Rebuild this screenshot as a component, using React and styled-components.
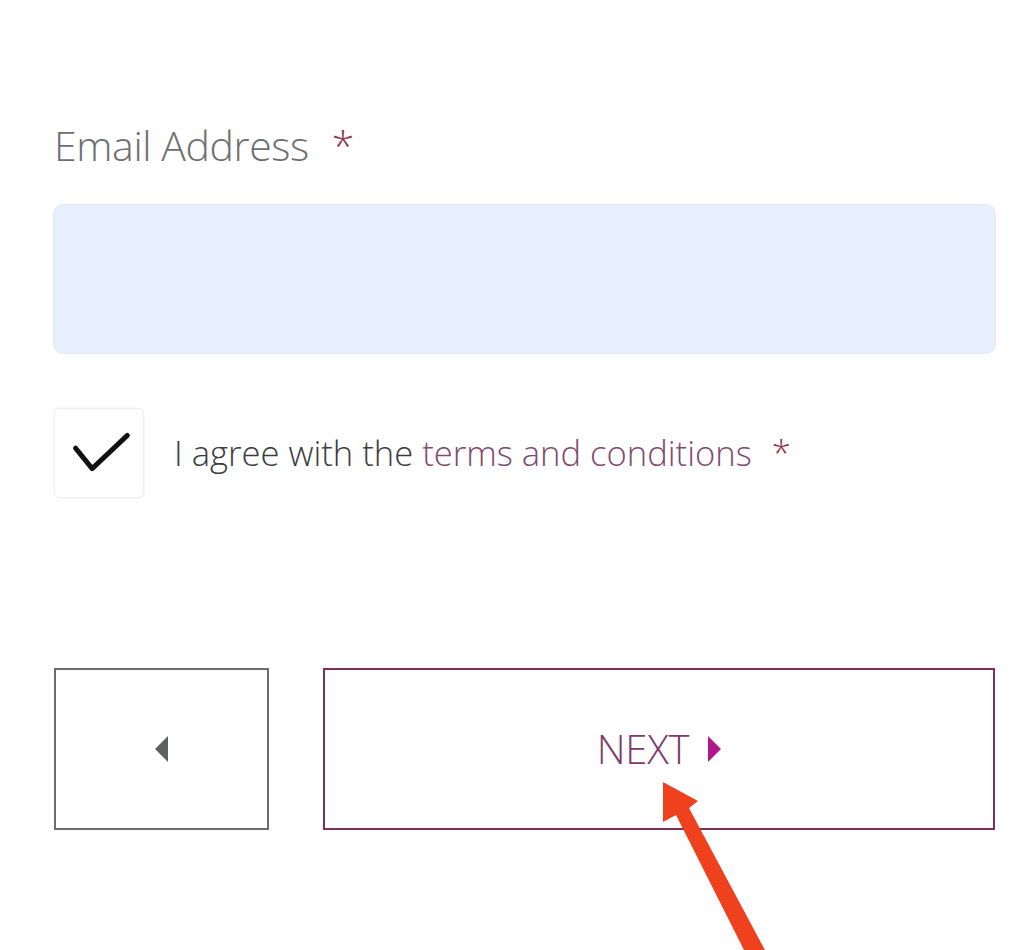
import React from "react";
import styled, { createGlobalStyle } from "styled-components";

const GlobalStyle = createGlobalStyle`
    html, body {
        margin: 0;
        padding: 0;
        background: #ffffff;
        font-family: "Open Sans", "Liberation Sans", sans-serif;
    }
`;

const Page = styled.div`
    position: relative;
    width: 1024px;
    height: 950px;
    overflow: hidden;
    box-sizing: border-box;
    padding: 120px 29px 0 54px;
`;

const Label = styled.div`
    font-size: 41px;
    line-height: 50px;
    font-weight: 300;
    color: #6e6e6e;
    letter-spacing: -0.4px;
`;

const Required = styled.span`
    color: #93344f;
    margin-left: ${(props) => props.gap || "24px"};
`;

const Input = styled.div`
    margin-top: 35px;
    height: 148px;
    border-radius: 9px;
    background: #e8effc;
    box-shadow: 0 0 0 1px #e3e8f1;
`;

const AgreeRow = styled.div`
    margin-top: 55px;
    display: flex;
    align-items: center;
    gap: 30px;
`;

const CheckBox = styled.div`
    width: 90px;
    height: 90px;
    box-sizing: border-box;
    border: 1px solid #eeeeee;
    border-radius: 5px;
    background: #fff;
    box-shadow: 0 0 3px rgba(0, 0, 0, 0.06);
    display: flex;
    align-items: center;
    justify-content: center;
`;

const AgreeText = styled.div`
    font-size: 34.6px;
    line-height: 44px;
    font-weight: 300;
    color: #3c3c3c;
`;

const Terms = styled.span`
    color: #7e4a6f;
`;

const Buttons = styled.div`
    margin-top: 170px;
    display: flex;
    gap: 54px;
`;

const NavButton = styled.div`
    width: ${(props) => props.width || "auto"};
    flex: ${(props) => (props.grow ? 1 : "none")};
    height: 162px;
    box-sizing: border-box;
    border: 2px solid ${(props) => props.border};
    background: #fff;
    display: flex;
    align-items: center;
    justify-content: center;
    gap: 19px;
`;

const NextText = styled.span`
    font-size: 40px;
    line-height: 48px;
    font-weight: 300;
    color: #7d3b6c;
    letter-spacing: -0.2px;
`;

const Arrow = styled.svg`
    position: absolute;
    left: 0;
    top: 0;
    pointer-events: none;
`;

const App = () => {
    return (
        <Page>
            <GlobalStyle />
            <Label>
                Email Address
                <Required gap="23px">*</Required>
            </Label>
            <Input />
            <AgreeRow>
                <CheckBox>
                    <svg width="90" height="90" viewBox="0 0 90 90">
                        <polyline
                            points="21,40 38,61 74,27"
                            fill="none"
                            stroke="#111111"
                            strokeWidth="5"
                            strokeLinecap="round"
                            strokeLinejoin="round"
                        />
                    </svg>
                </CheckBox>
                <AgreeText>
                    I agree with the <Terms>terms and conditions</Terms>
                    <Required gap="20px">*</Required>
                </AgreeText>
            </AgreeRow>
            <Buttons>
                <NavButton width="215px" border="#6c6c6c">
                    <svg width="13" height="26" viewBox="0 0 13 26">
                        <polygon points="13,0 13,26 0,13" fill="#5c615f" />
                    </svg>
                </NavButton>
                <NavButton grow border="#7f2f5c">
                    <NextText>NEXT</NextText>
                    <svg width="13" height="26" viewBox="0 0 13 26">
                        <polygon points="0,0 0,26 13,13" fill="#b0178a" />
                    </svg>
                </NavButton>
            </Buttons>
            <Arrow width="1024" height="950" viewBox="0 0 1024 950">
                <polygon
                    points="663,782 698,801 689,808 765,950 744,950 676,815 663,822"
                    fill="#f0411f"
                />
            </Arrow>
        </Page>
    );
};

export default App;
